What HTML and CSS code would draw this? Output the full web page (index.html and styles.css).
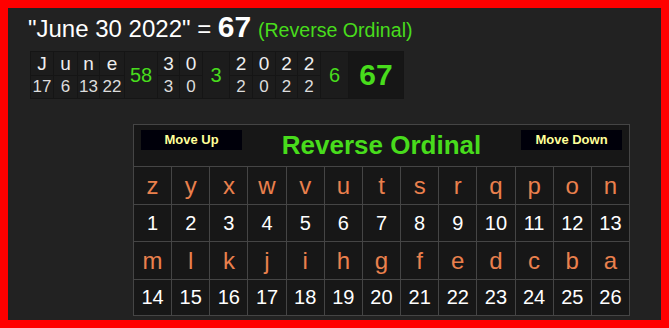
FILE: index.html
```html
<!DOCTYPE html>
<html>
<head>
<meta charset="utf-8">
<link rel="stylesheet" href="styles.css">
</head>
<body>
<div class="frame">
  <div class="title">"June 30 2022" = <b class="big">67</b> <span class="green">(Reverse Ordinal)</span></div>

  <div class="breakdown">
    <div class="ch c1">J</div>
    <div class="ch c2">u</div>
    <div class="ch c3">n</div>
    <div class="ch c4">e</div>
    <div class="sum c5">58</div>
    <div class="ch c6">3</div>
    <div class="ch c7">0</div>
    <div class="sum c8">3</div>
    <div class="ch c9">2</div>
    <div class="ch c10">0</div>
    <div class="ch c11">2</div>
    <div class="ch c12">2</div>
    <div class="sum c13">6</div>
    <div class="total c14">67</div>

    <div class="val c1">17</div>
    <div class="val c2">6</div>
    <div class="val c3">13</div>
    <div class="val c4">22</div>
    <div class="val c6">3</div>
    <div class="val c7">0</div>
    <div class="val c9">2</div>
    <div class="val c10">0</div>
    <div class="val c11">2</div>
    <div class="val c12">2</div>
  </div>

  <div class="cipher">
    <div class="head">
      <div class="btn">Move Up</div>
      <div class="name">Reverse Ordinal</div>
      <div class="btn">Move Down</div>
    </div>
    <div class="l">z</div><div class="l">y</div><div class="l">x</div><div class="l">w</div><div class="l">v</div><div class="l">u</div><div class="l">t</div><div class="l">s</div><div class="l">r</div><div class="l">q</div><div class="l">p</div><div class="l">o</div><div class="l">n</div>
    <div class="n">1</div><div class="n">2</div><div class="n">3</div><div class="n">4</div><div class="n">5</div><div class="n">6</div><div class="n">7</div><div class="n">8</div><div class="n">9</div><div class="n">10</div><div class="n">11</div><div class="n">12</div><div class="n">13</div>
    <div class="l">m</div><div class="l">l</div><div class="l">k</div><div class="l">j</div><div class="l">i</div><div class="l">h</div><div class="l">g</div><div class="l">f</div><div class="l">e</div><div class="l">d</div><div class="l">c</div><div class="l">b</div><div class="l">a</div>
    <div class="n">14</div><div class="n">15</div><div class="n">16</div><div class="n">17</div><div class="n">18</div><div class="n">19</div><div class="n">20</div><div class="n">21</div><div class="n">22</div><div class="n">23</div><div class="n">24</div><div class="n">25</div><div class="n">26</div>
  </div>
</div>
</body>
</html>
```

FILE: styles.css
```css
html, body {
  margin: 0;
  padding: 0;
  background: #222;
}

body {
  font-family: "Liberation Sans", Arial, sans-serif;
}

.frame {
  border: 8px solid #ff0000;
  background: #222222;
  height: 312px;
  padding-left: 20px;
  overflow: hidden;
}

.title {
  padding-top: 2px;
  color: #ffffff;
  font-size: 24px;
  white-space: nowrap;
}

.title .big {
  font-size: 30px;
  font-weight: bold;
}

.title .green {
  color: #48dc1c;
  font-size: 19.6px;
}

.breakdown {
  margin-top: 7px;
  margin-left: 2px;
  display: grid;
  grid-template-columns: 22px 23px 21px 24px 32px 21px 22px 26px 22px 22px 21px 22px 27px 54px;
  grid-template-rows: 23px 22px;
  gap: 1px;
  border: 1px solid #151515;
  background: #151515;
  width: max-content;
}

.breakdown > div {
  background: #1c1c1c;
  display: flex;
  align-items: center;
  justify-content: center;
}

.c1 { grid-column: 1; }
.c2 { grid-column: 2; }
.c3 { grid-column: 3; }
.c4 { grid-column: 4; }
.c5 { grid-column: 5; }
.c6 { grid-column: 6; }
.c7 { grid-column: 7; }
.c8 { grid-column: 8; }
.c9 { grid-column: 9; }
.c10 { grid-column: 10; }
.c11 { grid-column: 11; }
.c12 { grid-column: 12; }
.c13 { grid-column: 13; }
.c14 { grid-column: 14; }

.ch {
  grid-row: 1;
  color: #eeeeee;
  font-size: 19px;
}

.val {
  grid-row: 2;
  color: #dddddd;
  font-size: 17px;
}

.sum {
  grid-row: 1 / span 2;
  color: #48dc1c;
  font-size: 20px;
}

.breakdown > .total {
  grid-row: 1 / span 2;
  color: #48dc1c;
  font-size: 30px;
  font-weight: bold;
  background: #161616;
}

.cipher {
  margin-top: 25px;
  margin-left: 105px;
  width: 497px;
  box-sizing: border-box;
  display: grid;
  grid-template-columns: repeat(13, 1fr);
  grid-template-rows: 41px 37px 36px 37px 35px;
  gap: 1px;
  border: 1px solid #454545;
  background: #454545;
}

.cipher > div {
  background: #171717;
  display: flex;
  align-items: center;
  justify-content: center;
}

.cipher > .head {
  grid-column: 1 / -1;
  justify-content: space-between;
  align-items: flex-start;
  padding: 0 7px;
}

.btn {
  margin-top: 5px;
  width: 101px;
  height: 20px;
  line-height: 20px;
  background: #00000a;
  color: #ffff99;
  font-size: 13px;
  font-weight: bold;
  text-align: center;
}

.name {
  margin-top: 5px;
  color: #48dc1c;
  font-size: 26px;
  font-weight: bold;
}

.l {
  color: #ea804d;
  font-size: 24px;
}

.n {
  color: #ffffff;
  font-size: 20px;
}
```
